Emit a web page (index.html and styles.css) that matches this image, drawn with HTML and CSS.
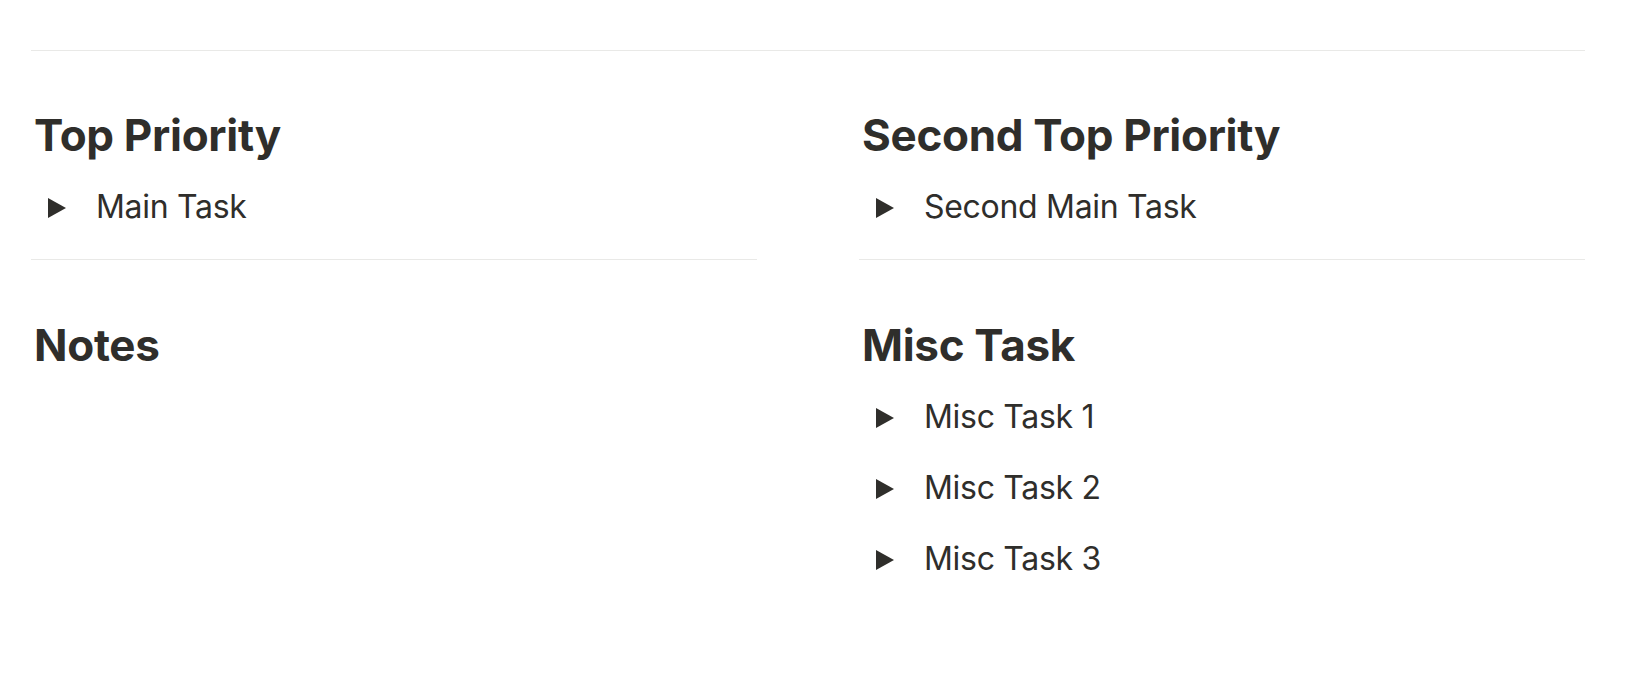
FILE: index.html
```html
<!DOCTYPE html>
<html lang="en">
<head>
<meta charset="utf-8">
<title>Priorities</title>
<link rel="stylesheet" href="styles.css">
</head>
<body>
<main class="page">
  <hr class="divider divider-top">
  <div class="columns">
    <div class="column">
      <section class="block block-first">
        <h2 class="heading">Top Priority</h2>
        <div class="toggle">
          <span class="arrow"><svg width="18" height="20" viewBox="0 0 18 20"><polygon points="0,0 18,10 0,20"/></svg></span>
          <span class="label">Main Task</span>
        </div>
      </section>
      <hr class="divider">
      <section class="block">
        <h2 class="heading">Notes</h2>
      </section>
    </div>
    <div class="column">
      <section class="block block-first">
        <h2 class="heading">Second Top Priority</h2>
        <div class="toggle">
          <span class="arrow"><svg width="18" height="20" viewBox="0 0 18 20"><polygon points="0,0 18,10 0,20"/></svg></span>
          <span class="label">Second Main Task</span>
        </div>
      </section>
      <hr class="divider">
      <section class="block">
        <h2 class="heading">Misc Task</h2>
        <div class="toggle">
          <span class="arrow"><svg width="18" height="20" viewBox="0 0 18 20"><polygon points="0,0 18,10 0,20"/></svg></span>
          <span class="label">Misc Task 1</span>
        </div>
        <div class="toggle">
          <span class="arrow"><svg width="18" height="20" viewBox="0 0 18 20"><polygon points="0,0 18,10 0,20"/></svg></span>
          <span class="label">Misc Task 2</span>
        </div>
        <div class="toggle">
          <span class="arrow"><svg width="18" height="20" viewBox="0 0 18 20"><polygon points="0,0 18,10 0,20"/></svg></span>
          <span class="label">Misc Task 3</span>
        </div>
      </section>
    </div>
  </div>
</main>
</body>
</html>
```
FILE: styles.css
```css
html, body {
  margin: 0;
  padding: 0;
  background: #ffffff;
}

body {
  font-family: Inter, "Noto Sans", "Liberation Sans", sans-serif;
  color: #2f2e2b;
}

.page {
  padding: 50px 47px 0 31px;
}

.divider {
  margin: 0;
  border: 0;
  height: 1px;
  background: #e9e9e7;
}

.columns {
  display: grid;
  grid-template-columns: 1fr 1fr;
  column-gap: 102px;
}

.column {
  display: flex;
  flex-direction: column;
}

.column > .divider {
  margin-top: 18px;
}

.block {
  padding-top: 58px;
}

.block-first {
  padding-top: 57px;
}

.heading {
  margin: 0 0 7px 0;
  padding-left: 3px;
  font-size: 44px;
  line-height: 55px;
  font-weight: 700;
  letter-spacing: -0.3px;
}

.toggle {
  display: flex;
  align-items: flex-start;
  padding: 13px 0 10px 17px;
  font-size: 32px;
  line-height: 48px;
}

.arrow {
  display: flex;
  width: 48px;
  height: 48px;
  flex-shrink: 0;
}

.arrow svg {
  margin-top: 15px;
  fill: #2f2e2b;
}

.label {
  font-weight: 400;
  letter-spacing: -0.3px;
}
```
